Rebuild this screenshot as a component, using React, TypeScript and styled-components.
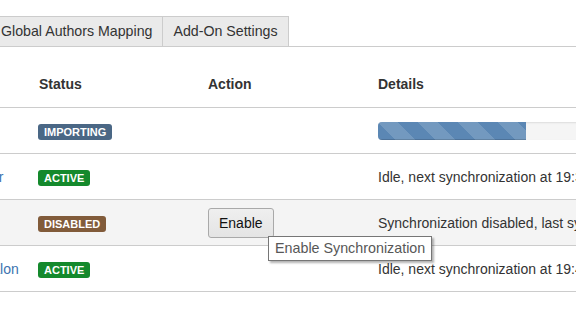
import React from "react";
import styled, { createGlobalStyle } from "styled-components";

const GlobalStyle = createGlobalStyle`
  html, body {
    margin: 0;
    padding: 0;
    background: #fff;
  }
  body {
    font-family: "Liberation Sans", Arial, sans-serif;
    font-size: 14px;
    line-height: 20px;
    color: #333;
    overflow: hidden;
  }
`;

const Page = styled.div`
  width: 576px;
  height: 330px;
  overflow: hidden;
  padding-top: 16px;
  box-sizing: border-box;
`;

const TabBar = styled.div`
  display: flex;
  margin-left: -10px;
  border-bottom: 1px solid #ccc;
`;

const Tab = styled.div`
  height: 29px;
  line-height: 29px;
  padding: 0 10px;
  border: 1px solid #ccc;
  border-bottom: none;
  background: #eaeaea;
  color: #333;
  font-size: 14.2px;
  white-space: nowrap;
  & + & {
    margin-left: -1px;
  }
`;

const Table = styled.div`
  margin-top: 20px;
  margin-left: -121px;
  width: calc(100% + 241px);
`;

const cols = "150px 169px 170px 1fr";

const HeadRow = styled.div`
  display: grid;
  grid-template-columns: ${cols};
  border-bottom: 1px solid #ccc;
`;

const HeadCell = styled.div`
  padding: 7px 10px 13px;
  font-weight: bold;
  color: #333;
  white-space: nowrap;
`;

const Row = styled.div<{ $muted?: boolean }>`
  display: grid;
  grid-template-columns: ${cols};
  height: 46px;
  box-sizing: border-box;
  align-items: center;
  border-bottom: 1px solid #ccc;
  background: ${(p) => (p.$muted ? "#f4f4f4" : "#fff")};
`;

const Cell = styled.div`
  padding: 0 10px;
  white-space: nowrap;
  min-width: 0;
  position: relative;
`;

const NameLink = styled.a`
  color: #3b73af;
  text-decoration: none;
`;

const Lozenge = styled.span<{ $tone: string }>`
  display: inline-block;
  margin-left: -1px;
  font-size: 11px;
  font-weight: bold;
  line-height: 13px;
  padding: 2px 6px 1px;
  border-radius: 3px;
  color: #fff;
  text-transform: uppercase;
  vertical-align: middle;
  background: ${(p) => p.$tone};
`;

const Track = styled.div`
  height: 18px;
  background: #f5f5f5;
  border-radius: 4px;
  box-shadow: inset 0 1px 2px rgba(0, 0, 0, 0.1);
  overflow: hidden;
`;

const Fill = styled.div`
  height: 100%;
  background-color: #5b87b4;
  background-image: linear-gradient(
    45deg,
    rgba(255, 255, 255, 0.15) 25%,
    transparent 25%,
    transparent 50%,
    rgba(255, 255, 255, 0.15) 50%,
    rgba(255, 255, 255, 0.15) 75%,
    transparent 75%,
    transparent
  );
  background-size: 40px 40px;
  box-shadow: inset 0 -1px 0 rgba(0, 0, 0, 0.15);
`;

const Details = styled.span`
  color: #333;
`;

const ButtonWrap = styled.div`
  position: relative;
  display: inline-block;
`;

const Button = styled.button`
  height: 30px;
  padding: 0 10px;
  font-family: "Liberation Sans", Arial, sans-serif;
  font-size: 14px;
  color: #111;
  background: linear-gradient(#efefef, #e4e4e4);
  border: 1px solid #a9a9a9;
  border-radius: 3px;
  cursor: pointer;
`;

const Tooltip = styled.div`
  position: absolute;
  left: 60px;
  top: 28px;
  z-index: 5;
  padding: 2px 6px;
  line-height: 19px;
  font-size: 14.3px;
  color: #575757;
  background: #fff;
  border: 1px solid #767676;
  box-shadow: 2px 2px 2px rgba(0, 0, 0, 0.3);
  white-space: nowrap;
`;

type Item = {
  name: string;
  status: string;
  tone: string;
  progress?: number;
  details?: string;
  action?: boolean;
  muted?: boolean;
};

const items: Item[] = [
  { name: "Legacy Server", status: "Importing", tone: "#4a6785", progress: 48 },
  {
    name: "Madrid Jira Server",
    status: "Active",
    tone: "#14892c",
    details: "Idle, next synchronization at 19:30",
  },
  {
    name: "Archive",
    status: "Disabled",
    tone: "#815b3a",
    details: "Synchronization disabled, last synchronization at 18:00",
    action: true,
    muted: true,
  },
  {
    name: "Global Space Avalon",
    status: "Active",
    tone: "#14892c",
    details: "Idle, next synchronization at 19:45",
  },
];

export default function App() {
  return (
    <>
      <GlobalStyle />
      <Page>
        <TabBar>
          <Tab>Global Authors Mapping</Tab>
          <Tab>Add-On Settings</Tab>
        </TabBar>
        <Table>
          <HeadRow>
            <HeadCell>Name</HeadCell>
            <HeadCell>Status</HeadCell>
            <HeadCell>Action</HeadCell>
            <HeadCell>Details</HeadCell>
          </HeadRow>
          {items.map((it) => (
            <Row key={it.name} $muted={it.muted}>
              <Cell>
                <NameLink href="#">{it.name}</NameLink>
              </Cell>
              <Cell>
                <Lozenge $tone={it.tone}>{it.status}</Lozenge>
              </Cell>
              <Cell>
                {it.action && (
                  <ButtonWrap>
                    <Button>Enable</Button>
                    <Tooltip>Enable Synchronization</Tooltip>
                  </ButtonWrap>
                )}
              </Cell>
              <Cell>
                {it.progress !== undefined ? (
                  <Track>
                    <Fill style={{ width: `${it.progress}%` }} />
                  </Track>
                ) : (
                  <Details>{it.details}</Details>
                )}
              </Cell>
            </Row>
          ))}
        </Table>
      </Page>
    </>
  );
}
